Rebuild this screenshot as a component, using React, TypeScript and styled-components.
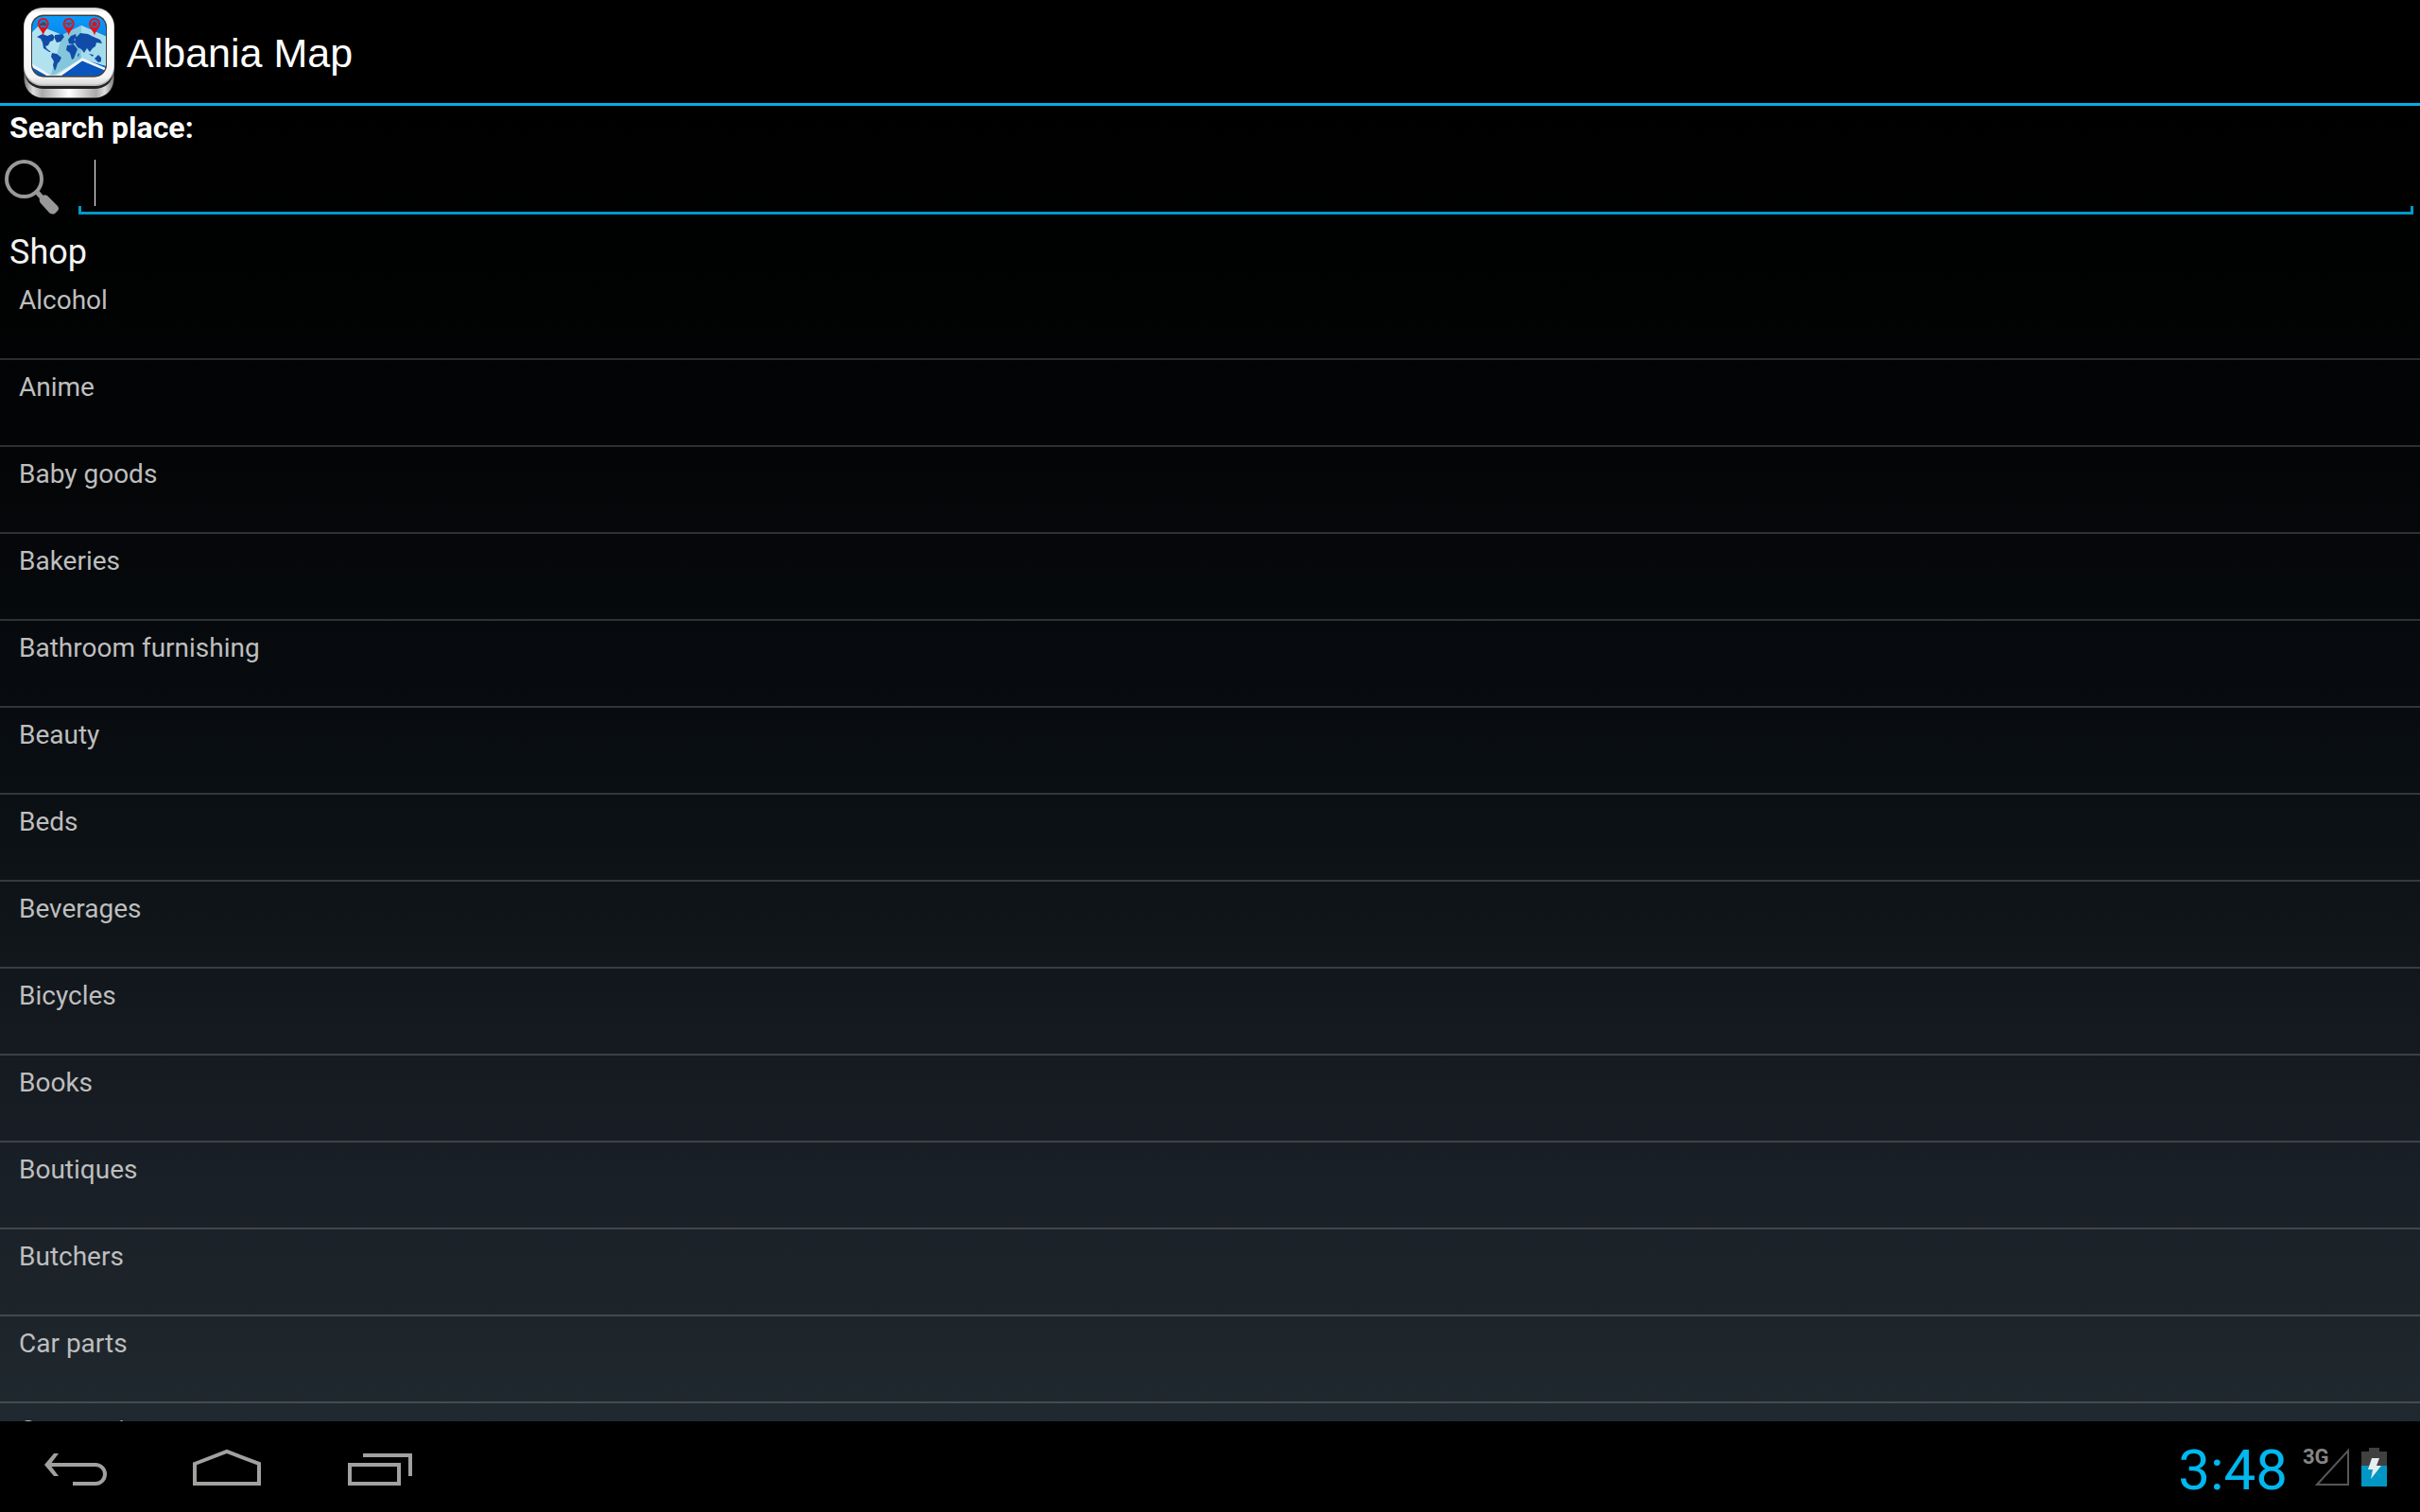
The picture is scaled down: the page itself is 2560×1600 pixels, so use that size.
import React from "react";
import styled, { createGlobalStyle } from "styled-components";

const GlobalStyle = createGlobalStyle`
  * { box-sizing: border-box; }
  html, body, #root { height: 100%; }
  body {
    margin: 0;
    background: #000;
    font-family: Roboto, "Noto Sans", sans-serif;
    color: #fff;
  }
  ul { margin: 0; padding: 0; list-style: none; }
  button { border: 0; margin: 0; padding: 0; background: none; font: inherit; color: inherit; }
`;

const Screen = styled.div`
  height: 100vh;
  display: flex;
  flex-direction: column;
  overflow: hidden;
`;

const Activity = styled.div`
  flex: 1;
  min-height: 0;
  display: flex;
  flex-direction: column;
  overflow: hidden;
  background: linear-gradient(#000 0%, #010202 15%, #040507 27%, #080c10 46%, #10161a 64%, #181e25 79%, #20292f 100%);
`;

const TitleBar = styled.header`
  flex: none;
  height: 112px;
  display: flex;
  align-items: center;
  gap: 13px;
  padding-top: 3px;
  padding-left: 25px;
  background: #000;
  border-bottom: 3px solid #00b0e8;
`;

const Title = styled.h1`
  margin: 0;
  font: 400 43px/48px "Liberation Sans", Arial, sans-serif;
`;

const SearchLabel = styled.label`
  flex: none;
  padding-top: 2px;
  padding-left: 10px;
  font-size: 32px;
  line-height: 42px;
  font-weight: 700;
`;

const SearchRow = styled.div`
  flex: none;
  height: 89px;
  display: flex;
  align-items: flex-start;
  padding-right: 7px;
`;

const SearchButton = styled.button`
  width: 83px;
  height: 71px;
  svg { display: block; }
`;

const Field = styled.div`
  position: relative;
  flex: 1;
  height: 71px;
`;

const SearchInput = styled.input`
  display: block;
  width: 100%;
  height: 100%;
  border: 0;
  outline: 0;
  padding: 0 17px;
  color: #fff;
  caret-color: transparent;
  font: 36px Roboto, sans-serif;
  background:
    linear-gradient(#0099cc, #0099cc) left bottom / 3px 9px no-repeat,
    linear-gradient(#0099cc, #0099cc) right bottom / 3px 9px no-repeat,
    linear-gradient(#0099cc, #0099cc) left bottom / 100% 3px no-repeat;
`;

const Caret = styled.span`
  position: absolute;
  left: 17px;
  top: 13px;
  width: 1px;
  height: 49px;
  background: #fff;
`;

const SectionTitle = styled.h2`
  flex: none;
  margin: 0;
  padding-left: 10px;
  font-size: 36px;
  line-height: 44px;
  font-weight: 400;
  color: #f3f3f3;
`;

const PlaceList = styled.ul`
  flex: 1;
  min-height: 0;
  overflow: hidden;
`;

const PlaceItem = styled.li`
  border-bottom: 2px solid rgba(255, 255, 255, 0.17);
`;

const PlaceButton = styled.button`
  display: flex;
  align-items: flex-start;
  width: 100%;
  height: 90px;
  padding: 11px 20px;
  text-align: left;
  font-size: 28px;
  line-height: 36px;
  color: #bebebe;
`;

const SystemBar = styled.nav`
  flex: none;
  height: 96px;
  display: flex;
  justify-content: space-between;
  background: #000;
`;

const Keys = styled.div`
  display: flex;
`;

const Key = styled.button`
  width: 160px;
  height: 96px;
  svg { display: block; }
`;

const Status = styled.div`
  display: flex;
  align-items: center;
  padding-right: 35px;
`;

const Clock = styled.time`
  margin-right: 16px;
  padding-top: 7px;
  font-size: 60px;
  line-height: 64px;
  color: #00b8ee;
`;

const Network = styled.div`
  position: relative;
  width: 52px;
  height: 40px;
  margin-right: 10px;
  svg { display: block; }
`;

const NetworkType = styled.span`
  position: absolute;
  left: 0;
  top: 0;
  font-size: 22px;
  line-height: 20px;
  font-weight: 700;
  color: #858585;
`;

const places = [
  "Alcohol", "Anime", "Baby goods", "Bakeries", "Bathroom furnishing", "Beauty", "Beds",
  "Beverages", "Bicycles", "Books", "Boutiques", "Butchers", "Car parts", "Car repair",
];

const Pin = ({ x, children }: { x: number; children: React.ReactNode }) => (
  <g transform={`translate(${x} 17.5)`}>
    <path d="M0 12 C-1 7 -6 4 -6 -0.5 A6 6 0 0 1 6 -0.5 C6 4 1 7 0 12Z" fill="#e80d16" />
    <circle cy="-0.5" r="4.3" fill="#1580cf" />
    {children}
  </g>
);

const Logo = () => (
  <svg width="96" height="96" viewBox="0 0 96 96" aria-hidden="true">
    <defs>
      <linearGradient id="base" x1="0" x2="1">
        <stop offset="0" stopColor="#777" />
        <stop offset=".1" stopColor="#ddd" />
        <stop offset=".2" stopColor="#aaa" />
        <stop offset=".5" stopColor="#fff" />
        <stop offset=".8" stopColor="#aaa" />
        <stop offset=".9" stopColor="#ddd" />
        <stop offset="1" stopColor="#777" />
      </linearGradient>
      <linearGradient id="frame" x1="0" x2="0" y1="0" y2="1">
        <stop offset="0" stopColor="#d5d5d5" />
        <stop offset=".06" stopColor="#fff" />
        <stop offset=".9" stopColor="#f4f4f4" />
        <stop offset="1" stopColor="#d8d8d8" />
      </linearGradient>
      <linearGradient id="sky" x1="0" x2="0" y1="0" y2="1">
        <stop offset="0" stopColor="#0a9bfa" />
        <stop offset=".6" stopColor="#0878de" />
        <stop offset="1" stopColor="#0650b4" />
      </linearGradient>
      <clipPath id="glass"><rect x="9" y="9" width="78" height="63" rx="12" /></clipPath>
    </defs>
    <rect x="0.5" y="30" width="95" height="65.5" rx="20" fill="url(#base)" />
    <path d="M0.5 67 Q3 86 22 86 H74 Q93 86 95.5 67 V62 H0.5Z" fill="#222" />
    <rect x="0" y="0" width="96" height="83" rx="20" fill="#b8b8b8" />
    <rect x="0.5" y="0.5" width="95" height="81" rx="20" fill="url(#frame)" />
    <rect x="8" y="7.5" width="80" height="66" rx="13" fill="#555" />
    <g clipPath="url(#glass)">
      <rect x="8" y="8" width="80" height="66" fill="url(#sky)" />
      <path d="M8 27 L16 19 L41 29 L61 19 L88 31 V62 L62 54 L35 74 L8 61Z" fill="#b2e2ef" />
      <path d="M41 29 L61 19 V54 L28 74Z" fill="#84c6dc" />
      <path d="M61 19 L88 31 V62 L61 54Z" fill="#a5dcec" />
      <path d="M8 61 L29 73 H36 L62 55 L88 66" fill="none" stroke="#f2f6fa" strokeWidth="3" />
      <path d="M62 56.5 L88 67.5 V74 H38Z" fill="#0a55bd" />
      <path d="M14 31 L20 28 25 30 30 28 33 31 31 35 28 36 26 40 23 41 25 44 29 47 27 47 21 43 20 37 18 33Z" fill="#104ca7" />
      <path d="M33 29 L41 28 43 31 39 36 35 37 33 33Z" fill="#104ca7" />
      <path d="M30 48 L35 49 40 53 38 57 36 59 34 65 33 67 31 61 32 57 29 52Z" fill="#104ca7" />
      <path d="M47 34 L50 30 55 28 56 32 53 34 55 36 52 39 48 38Z M46 40 L53 39 57 44 55 49 53 54 51 55 49 48 45 45Z" fill="#104ca7" />
      <path d="M55 32 L60 27 68 28 74 31 81 34 83 38 77 37 76 41 73 43 70 47 67 43 64 48 61 44 57 42 54 37Z" fill="#104ca7" />
      <path d="M75 54 L79 50 82 53 82 57 79 58Z M69 49 L74 50 73 52Z M57 50 L59 48 58 53Z" fill="#104ca7" />
    </g>
    <rect x="8.5" y="8.5" width="79" height="64.5" rx="12.5" fill="none" stroke="#333" strokeOpacity=".8" />
    <Pin x={20.7}><path d="M-3.5 1.5 V-.5 L-2 -.5 -1 -2 H1.5 L3.5 0 V1.5Z" fill="#63384f" /></Pin>
    <Pin x={47.7}><path d="M-3.5 -1.5 H3.5 V0 H1 V2 H-1 V0 H-3.5Z" fill="#963449" /></Pin>
    <Pin x={75}><path d="M-3.2 -.5 L0 -3 3.2 -.5 H2.4 V2.3 H-2.4 V-.5Z" fill="#d4131f" /></Pin>
  </svg>
);

const SearchIcon = () => (
  <svg width="70" height="71" viewBox="0 2 70 71" fill="none" stroke="#999" aria-hidden="true">
    <circle cx="25.5" cy="35.5" r="18.5" strokeWidth="4" />
    <path d="M38 48 L46 57" strokeWidth="5" />
    <path d="M42 56 L45 53 Q49 51 51 54 L61 64 Q63 67 61 69 L58 72 Q55 73.5 52 71 L43 61 Q41 58 42 56Z" fill="#999" stroke="none" />
  </svg>
);

export default function App() {
  return (
    <>
      <GlobalStyle />
      <Screen>
        <TitleBar>
          <Logo />
          <Title>Albania Map</Title>
        </TitleBar>
        <Activity>
          <SearchLabel htmlFor="place">Search place:</SearchLabel>
          <SearchRow>
            <SearchButton type="button" aria-label="Search"><SearchIcon /></SearchButton>
            <Field>
              <SearchInput id="place" type="text" />
              <Caret />
            </Field>
          </SearchRow>
          <SectionTitle>Shop</SectionTitle>
          <PlaceList>
            {places.map((place) => (
              <PlaceItem key={place}>
                <PlaceButton type="button">{place}</PlaceButton>
              </PlaceItem>
            ))}
          </PlaceList>
        </Activity>
        <SystemBar>
          <Keys>
            <Key type="button" aria-label="Back">
              <svg width="160" height="96" fill="none" stroke="#a0a29f" strokeWidth="4">
                <path d="M51 46 H101 A10 10 0 0 1 101 66 H77" />
                <path d="M57 34 H62 L53 46 62 58 H57 L47 46Z" fill="#a0a29f" stroke="none" />
              </svg>
            </Key>
            <Key type="button" aria-label="Home">
              <svg width="160" height="96" fill="none" stroke="#a0a29f" strokeWidth="4">
                <path d="M46 45 L80 32 L114 45 V66 H46Z" />
              </svg>
            </Key>
            <Key type="button" aria-label="Recent apps">
              <svg width="160" height="96" fill="none" stroke="#a0a29f" strokeWidth="4">
                <path d="M50 46 H102 V66 H50Z M64 36 H114 V58" />
              </svg>
            </Key>
          </Keys>
          <Status>
            <Clock>3:48</Clock>
            <Network>
              <NetworkType>3G</NetworkType>
              <svg width="52" height="40" fill="none" stroke="#575757" strokeWidth="2" aria-hidden="true">
                <path d="M15 39 L48 3 V39Z" />
              </svg>
            </Network>
            <svg width="27" height="41" viewBox="0 0 27 41" role="img" aria-label="Battery charging">
              <path d="M8 0 H19 V4 H27 V41 H0 V4 H8Z" fill="#404040" />
              <path d="M0 19 H27 V41 H0Z" fill="#0097c4" />
              <path d="M11 11 H19 L16 19 H21 L10 33 L12 23 H7Z" fill="#e6edf0" />
            </svg>
          </Status>
        </SystemBar>
      </Screen>
    </>
  );
}
